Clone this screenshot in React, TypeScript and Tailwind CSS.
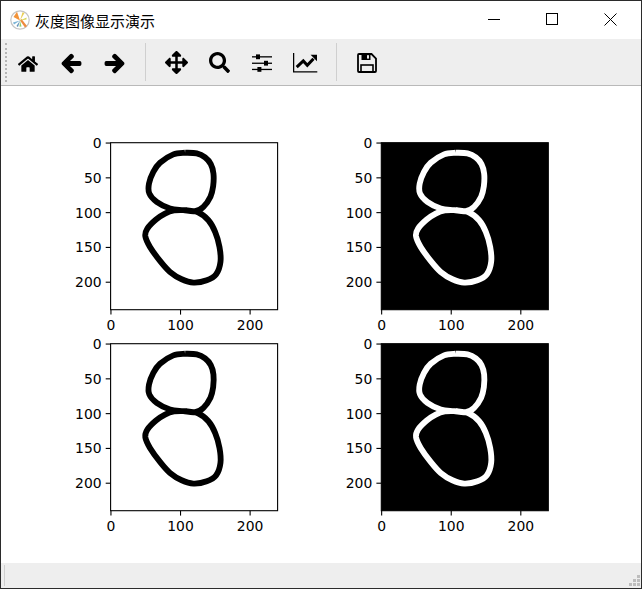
import React from 'react';
import { FaHome, FaArrowLeft, FaArrowRight, FaArrowsAlt, FaSearch } from 'react-icons/fa';

const SCALE = 167 / 240;

// digit outline traced in data units (image is 240x240)
const toData = (zx: number, zy: number) => [((zx - 122) / 500) * 240, ((zy - 38) / 500) * 240];

const upperLoop = [
  [345, 68], [380, 70], [405, 82], [422, 102], [430, 130], [429, 168], [421, 200], [400, 230], [375, 243],
  [340, 240], [300, 235], [260, 215], [238, 190], [237, 160], [250, 125], [270, 98], [310, 73], [345, 68],
];
const lowerLoop = [
  [345, 240], [312, 241], [285, 250], [258, 268], [232, 295], [226, 318], [240, 350], [270, 392], [300, 425], [335, 447],
  [370, 457], [410, 450], [438, 432], [451, 395], [448, 350], [435, 305], [415, 270], [385, 247], [345, 240],
];

const smooth = (pts: number[][]) => {
  const p = pts.map(([x, y]) => toData(x, y));
  let d = `M${p[0][0].toFixed(1)} ${p[0][1].toFixed(1)}`;
  for (let i = 0; i < p.length - 1; i++) {
    const p0 = p[Math.max(i - 1, 0)];
    const p1 = p[i];
    const p2 = p[i + 1];
    const p3 = p[Math.min(i + 2, p.length - 1)];
    const c1x = p1[0] + (p2[0] - p0[0]) / 6;
    const c1y = p1[1] + (p2[1] - p0[1]) / 6;
    const c2x = p2[0] - (p3[0] - p1[0]) / 6;
    const c2y = p2[1] - (p3[1] - p1[1]) / 6;
    d += ` C${c1x.toFixed(1)} ${c1y.toFixed(1)} ${c2x.toFixed(1)} ${c2y.toFixed(1)} ${p2[0].toFixed(1)} ${p2[1].toFixed(1)}`;
  }
  return d;
};

const digitPath = `${smooth(upperLoop)} ${smooth(lowerLoop)}`;

const Subplot = ({ inverted, left }: { inverted?: boolean; left: number }) => {
  const top = 6.7;
  const w = 167;
  return (
    <svg width="271" height="201" className="block font-['DejaVu_Sans',sans-serif]">
      <rect x={left} y={top} width={w} height={w} fill={inverted ? '#000' : '#fff'} />
      <g transform={`translate(${left} ${top}) scale(${SCALE})`}>
        <path d={digitPath} fill="none" stroke={inverted ? '#fff' : '#000'} strokeWidth="8.4" strokeLinejoin="round" />
      </g>
      <rect x={left} y={top} width={w} height={w} fill="none" stroke="#000" strokeWidth="1.1" />
      {[0, 50, 100, 150, 200].map((t) => {
        const y = top + (t + 0.5) * SCALE;
        return (
          <g key={t}>
            <line x1={left - 4.9} x2={left} y1={y} y2={y} stroke="#000" strokeWidth="1.1" />
            <text x={left - 9} y={y} textAnchor="end" dominantBaseline="central" fontSize="13.9" fill="#000">{t}</text>
          </g>
        );
      })}
      {[0, 100, 200].map((t) => {
        const x = left + (t + 0.5) * SCALE;
        return (
          <g key={t}>
            <line x1={x} x2={x} y1={top + w} y2={top + w + 4.9} stroke="#000" strokeWidth="1.1" />
            <text x={x} y={top + w + 20.5} textAnchor="middle" fontSize="13.9" fill="#000">{t}</text>
          </g>
        );
      })}
    </svg>
  );
};

const Logo = () => (
  <svg width="20" height="20" viewBox="0 0 20 20" className="shrink-0">
    <circle cx="10" cy="10" r="9.2" fill="#fff" stroke="#c4c4c4" strokeWidth="1.2" />
    <path d="M10 10.5 L3.5 7 L7 1.8 Z" fill="#f2933a" />
    <path d="M10 10.5 L11.5 9 L17 16 L15 17.5 Z" fill="#ee8a3f" />
    <path d="M10 10.5 L14.5 3 L12.5 2.2 Z" fill="#e9cf55" />
    <path d="M10 10.5 L16.5 9.5 L16.5 7.5 Z" fill="#d7d65c" />
    <path d="M10 10.5 L11.5 16.5 L9.5 16.8 Z" fill="#8fcf6a" />
    <path d="M10 10.5 L3 12.5 L4 14.5 Z" fill="#7ab4d6" />
    <path d="M10 10.5 L6.5 16 L8 17 Z" fill="#5f8fb8" />
  </svg>
);

const SlidersIcon = () => (
  <svg width="20" height="19" viewBox="0 0 20 19" fill="#000">
    <rect x="0" y="2.2" width="20" height="1.3" />
    <rect x="0" y="8.6" width="20" height="1.3" />
    <rect x="0" y="14.8" width="20" height="1.3" />
    <rect x="4" y="0.4" width="4" height="4.8" />
    <rect x="12" y="6.8" width="4" height="4.8" />
    <rect x="5.4" y="13" width="4" height="4.8" />
  </svg>
);

const ChartIcon = () => (
  <svg width="25" height="20" viewBox="0 0 25 20" fill="none">
    <path d="M.6 0V18.9H24.3" stroke="#000" strokeWidth="1.3" />
    <path d="M3.7 14.2L10.3 8l4 4.3 6.2-6.6" stroke="#000" strokeWidth="3" />
    <path d="M17.6 1.7H24V8.2Z" fill="#000" />
  </svg>
);

const SaveIcon = () => (
  <svg width="20" height="20" viewBox="0 0 20 20" fill="none">
    <path d="M2 1H14.5L19 5.5V18a1 1 0 0 1-1 1H2a1 1 0 0 1-1-1V2a1 1 0 0 1 1-1Z" stroke="#000" strokeWidth="1.8" />
    <rect x="4.5" y="1" width="9" height="6" fill="#000" />
    <rect x="10" y="2.2" width="2" height="3.4" fill="#eeeeee" />
    <rect x="4" y="12" width="12" height="7" stroke="#000" strokeWidth="1.6" />
  </svg>
);

const Sep = () => <div className="w-px h-[38px] bg-[#cfcfcf]" />;

const ToolIcon = ({ children, className }: { children: React.ReactNode; className: string }) => (
  <div className={`flex items-center justify-center h-full shrink-0 text-black ${className}`}>{children}</div>
);

export default function App() {
  return (
    <div className="w-[642px] h-[589px] flex flex-col border border-[#2b2b2b] bg-white overflow-hidden">
      {/* title bar */}
      <div className="h-[38px] flex items-center shrink-0 font-['Noto_Sans_CJK_SC',sans-serif]">
        <div className="pl-[9px] pr-[5px]"><Logo /></div>
        <span className="text-[15px] leading-none text-black font-normal">灰度图像显示演示</span>
        <div className="ml-auto flex items-center h-full pb-[2px] pr-[1px]">
          <div className="w-[58px] flex justify-center"><div className="w-3 h-px bg-black" /></div>
          <div className="w-[58px] flex justify-center"><div className="w-3 h-3 border border-black" /></div>
          <div className="w-[59px] flex justify-center">
            <svg width="13" height="13" viewBox="0 0 13 13"><path d="M.5.5l12 12M12.5.5l-12 12" stroke="#000" fill="none" /></svg>
          </div>
        </div>
      </div>

      {/* toolbar */}
      <div className="h-[47px] shrink-0 bg-[#eeeeee] border-b border-[#b9b9b9] flex items-center">
        <div className="ml-[4px] w-[2px] h-[39px] border-l-2 border-dotted border-[#b5b5b5]" />
        <ToolIcon className="w-[43px] -ml-[1px] pt-[3px]"><FaHome size={20} /></ToolIcon>
        <ToolIcon className="w-[43px] pt-[2px] pl-[1px]"><FaArrowLeft size={21} stroke="currentColor" strokeWidth={36} /></ToolIcon>
        <ToolIcon className="w-[43px] pt-[2px] pl-[1px]"><FaArrowRight size={21} stroke="currentColor" strokeWidth={36} /></ToolIcon>
        <div className="ml-[10px] mr-[9px]"><Sep /></div>
        <ToolIcon className="w-[43px] pt-[1px]"><FaArrowsAlt size={23} /></ToolIcon>
        <ToolIcon className="w-[43px] pt-[1px]"><FaSearch size={21} /></ToolIcon>
        <ToolIcon className="w-[43px] pt-[2px] pr-[2px]"><SlidersIcon /></ToolIcon>
        <ToolIcon className="w-[43px] pt-[2px]"><ChartIcon /></ToolIcon>
        <div className="ml-[9px] mr-[8px]"><Sep /></div>
        <ToolIcon className="w-[43px] pt-[2px]"><SaveIcon /></ToolIcon>
      </div>

      {/* plot canvas */}
      <div className="flex-1 min-h-0 pt-[50px] pl-[69px]">
        <div className="grid grid-cols-[271px_271px] grid-rows-[201px_201px]">
          <Subplot left={40.6} />
          <Subplot inverted left={40.3} />
          <Subplot left={40.6} />
          <Subplot inverted left={40.3} />
        </div>
      </div>

      {/* status bar */}
      <div className="h-[25px] shrink-0 bg-[#eeeeee] flex items-center pl-[3px] relative">
        <div className="w-px h-[21px] bg-[#cfcfcf]" />
        <div className="absolute right-[1px] bottom-[2px] grid grid-cols-3 gap-px">
          {[0, 0, 1, 0, 1, 1, 1, 1, 1].map((on, i) => (
            <div key={i} className={on ? 'w-[3px] h-[3px] bg-[#bdbdbd]' : 'w-[3px] h-[3px]'} />
          ))}
        </div>
      </div>
    </div>
  );
}
